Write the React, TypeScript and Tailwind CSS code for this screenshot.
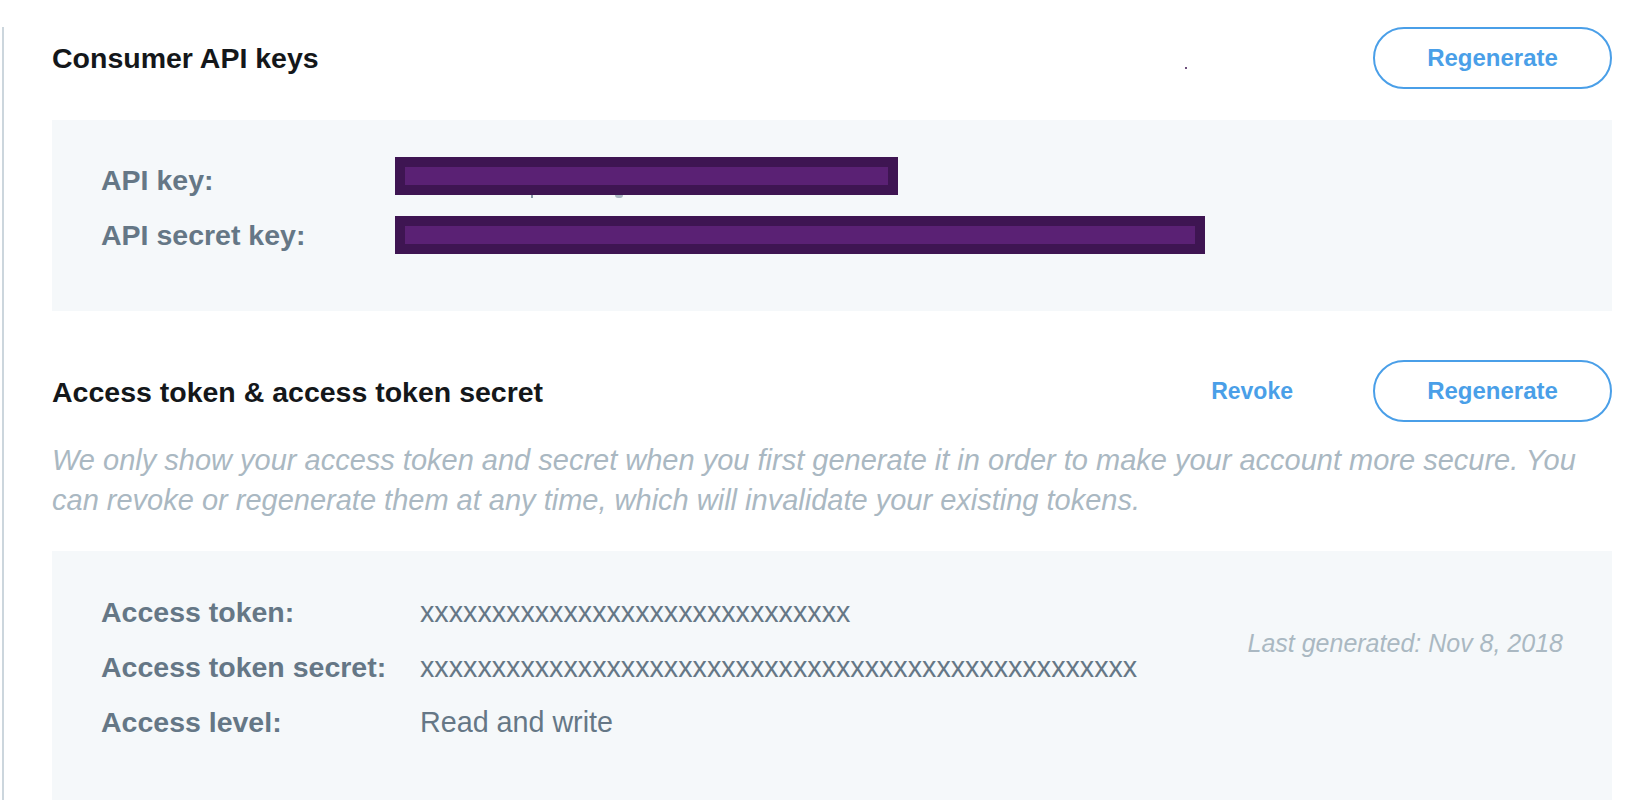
import React from "react";

const font = { fontFamily: '"Liberation Sans", Arial, Helvetica, sans-serif' };

function Redacted({ width, className, children }: { width: string; className?: string; children?: React.ReactNode }) {
  return (
    <div className={`relative h-[38px] bg-[#3e1552] px-[10px] py-[10px] ${width} ${className ?? ""}`}>
      <div className="h-full w-full bg-[#5a2174]" />
      {children}
    </div>
  );
}

function OutlineButton({ children }: { children: React.ReactNode }) {
  return (
    <button className="h-[62px] w-[239px] rounded-full border-2 border-[#4a9fe8] bg-white text-[24px] font-bold text-[#4a9fe8]">
      {children}
    </button>
  );
}

export default function App() {
  return (
    <div className="h-[800px] w-[1648px] overflow-hidden bg-white pl-[2px]" style={font}>
      <div className="h-full border-l-2 border-[#ccd6dd] pl-[48px] pr-[36px]">
        {/* Consumer API keys header */}
        <div className="relative mt-[27px] flex h-[62px] items-center justify-between">
          <h2 className="text-[28.5px] font-bold text-[#14171a]">Consumer API keys</h2>
          <span className="absolute left-[1133px] top-[40px] h-[2px] w-[2px] rounded-full bg-[#3e1552]" />
          <OutlineButton>Regenerate</OutlineButton>
        </div>

        {/* Consumer keys panel */}
        <div className="mt-[31px] h-[191px] bg-[#f5f8fa] pl-[49px] pt-[33px]">
          <div className="flex h-[55px] items-start">
            <div className="w-[294px] text-[28.5px] font-bold leading-[55px] text-[#657786]">API key:</div>
            <Redacted width="w-[503px]" className="mt-[4px]">
              <span className="absolute left-[136px] top-[38px] h-[3px] w-[2px] bg-[#8899a6]" />
              <span className="absolute left-[220px] top-[38px] h-[3px] w-[8px] rounded-b-full bg-[#aab8c2]" />
            </Redacted>
          </div>
          <div className="flex h-[55px] items-start">
            <div className="w-[294px] text-[28.5px] font-bold leading-[55px] text-[#657786]">API secret key:</div>
            <Redacted width="w-[810px]" className="mt-[8px]" />
          </div>
        </div>

        {/* Access token header */}
        <div className="mt-[49px] flex h-[62px] items-center justify-between">
          <h2 className="pt-[2px] text-[28.5px] font-bold text-[#14171a]">Access token &amp; access token secret</h2>
          <div className="flex items-center gap-[80px]">
            <button className="text-[23px] font-bold text-[#4a9fe8]">Revoke</button>
            <OutlineButton>Regenerate</OutlineButton>
          </div>
        </div>

        <p className="mt-[18px] text-[29px] italic leading-[40px] text-[#aab8c2]">
          We only show your access token and secret when you first generate it in order to make your account more secure. You can revoke or regenerate them at any time, which will invalidate your existing tokens.
        </p>

        {/* Access token panel */}
        <div className="mt-[31px] flex justify-between bg-[#f5f8fa] pb-[80px] pl-[49px] pr-[49px] pt-[34px]">
          <div className="flex flex-col">
            <div className="flex h-[55px] leading-[55px]">
              <div className="w-[319px] text-[28.5px] font-bold text-[#657786]">Access token:</div>
              <div className="text-[28.7px] text-[#657786]">xxxxxxxxxxxxxxxxxxxxxxxxxxxxxx</div>
            </div>
            <div className="flex h-[55px] leading-[55px]">
              <div className="w-[319px] text-[28.5px] font-bold text-[#657786]">Access token secret:</div>
              <div className="text-[28.7px] text-[#657786]">xxxxxxxxxxxxxxxxxxxxxxxxxxxxxxxxxxxxxxxxxxxxxxxxxx</div>
            </div>
            <div className="flex h-[55px] leading-[55px]">
              <div className="w-[319px] text-[28.5px] font-bold text-[#657786]">Access level:</div>
              <div className="text-[28.7px] text-[#657786]">Read and write</div>
            </div>
          </div>
          <div className="mt-[38px] text-[25px] italic leading-[40px] text-[#aab8c2]">Last generated: Nov 8, 2018</div>
        </div>
      </div>
    </div>
  );
}
